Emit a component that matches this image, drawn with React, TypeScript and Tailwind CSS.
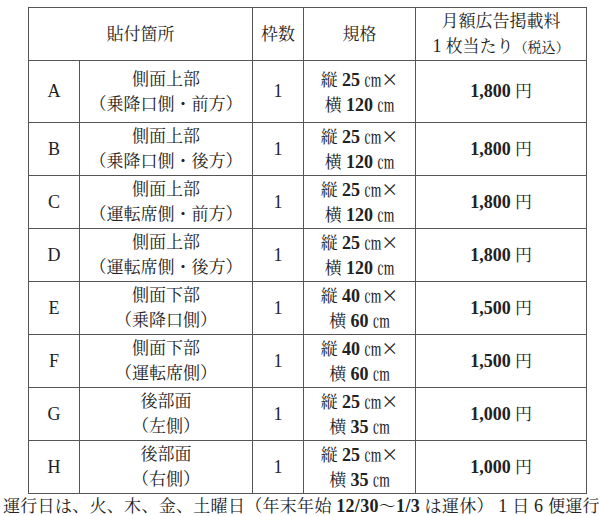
import React from "react";

const rows = [
  { id: "A", place: "側面上部", sub: "（乗降口側・前方）", h: 25, w: 120, price: "1,800", tall: true },
  { id: "B", place: "側面上部", sub: "（乗降口側・後方）", h: 25, w: 120, price: "1,800" },
  { id: "C", place: "側面上部", sub: "（運転席側・前方）", h: 25, w: 120, price: "1,800" },
  { id: "D", place: "側面上部", sub: "（運転席側・後方）", h: 25, w: 120, price: "1,800" },
  { id: "E", place: "側面下部", sub: "（乗降口側）", h: 40, w: 60, price: "1,500" },
  { id: "F", place: "側面下部", sub: "（運転席側）", h: 40, w: 60, price: "1,500" },
  { id: "G", place: "後部面", sub: "（左側）", h: 25, w: 35, price: "1,000" },
  { id: "H", place: "後部面", sub: "（右側）", h: 25, w: 35, price: "1,000" },
];

const font = {
  fontFamily: "'Liberation Serif', 'Noto Serif CJK JP', 'Noto Sans CJK JP', serif",
};
const cjk = { fontFamily: "'Noto Sans CJK JP', sans-serif" };

export default function App() {
  const cell = "border border-[#555] text-center align-middle p-0";
  return (
    <div className="w-[600px] h-[516px] bg-white text-[#222] text-[17px] leading-[25px] overflow-hidden" style={font}>
      <div className="pt-[7px] pl-[28px]">
        <table className="table-fixed border-collapse w-[558px]">
          <colgroup>
            <col className="w-[51px]" />
            <col className="w-[173px]" />
            <col className="w-[51px]" />
            <col className="w-[112px]" />
            <col className="w-[171px]" />
          </colgroup>
          <thead>
            <tr className="h-[53px]">
              <th colSpan={2} className={`${cell} font-normal`}>貼付箇所</th>
              <th className={`${cell} font-normal`}>枠数</th>
              <th className={`${cell} font-normal`}>規格</th>
              <th className={`${cell} font-normal`}>
                <div>月額広告掲載料</div>
                <div>
                  <span className="text-[18px]">1</span> 枚当たり<span className="text-[14px]">（税込）</span>
                </div>
              </th>
            </tr>
          </thead>
          <tbody>
            {rows.map((r) => (
              <tr key={r.id} className={r.tall ? "h-[62px]" : "h-[52.5px]"}>
                <td className={`${cell} text-[18px]`}>{r.id}</td>
                <td className={cell}>
                  <div>{r.place}</div>
                  <div>{r.sub}</div>
                </td>
                <td className={`${cell} text-[18px]`}>1</td>
                <td className={cell}>
                  <div>
                    縦 <b className="text-[18px]">{r.h}</b> ㎝<span style={cjk}>×</span>
                  </div>
                  <div>
                    横 <b className="text-[18px]">{r.w}</b> ㎝
                  </div>
                </td>
                <td className={cell}>
                  <b className="text-[18px]">{r.price}</b> 円
                </td>
              </tr>
            ))}
          </tbody>
        </table>
        <div className="-ml-[25px] whitespace-nowrap leading-[24px] tracking-[0.3px]">
          運行日は、火、木、金、土曜日（年末年始 <b className="text-[18px]">12/30</b>～<b className="text-[18px]">1/3</b> は運休） <span className="text-[18px]">1</span> 日 <span className="text-[18px]">6</span> 便運行
        </div>
      </div>
    </div>
  );
}
